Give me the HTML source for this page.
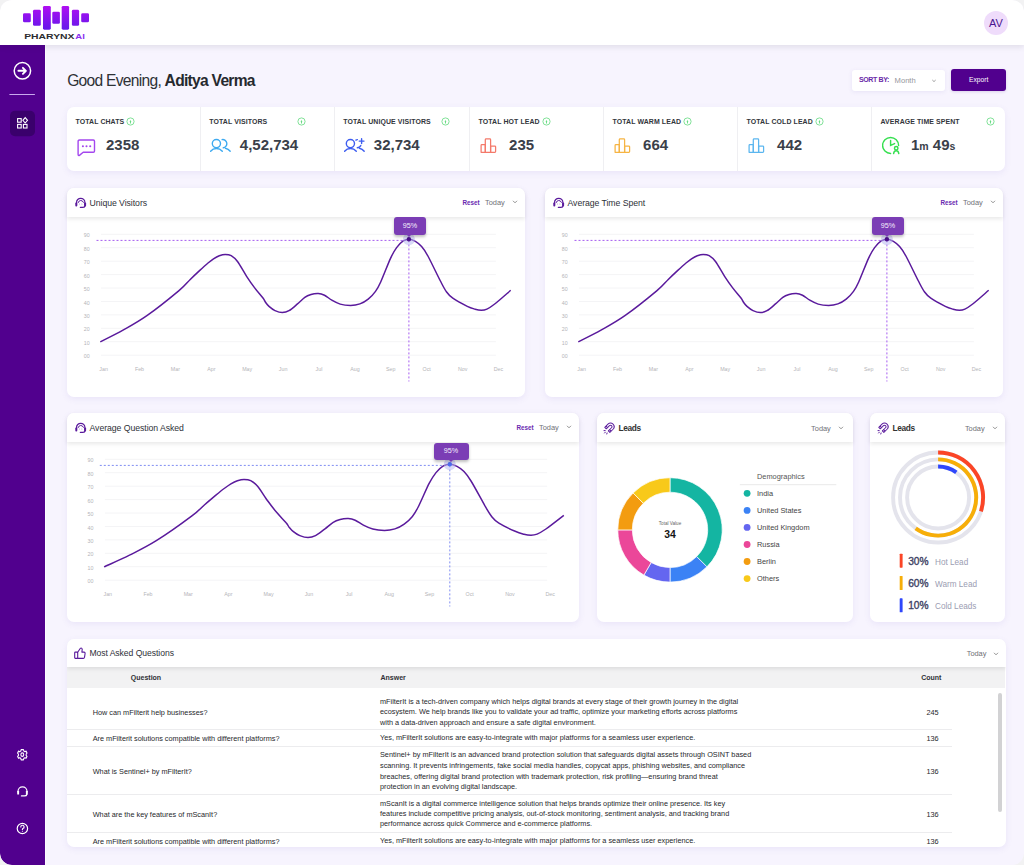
<!DOCTYPE html>
<html><head><meta charset="utf-8">
<style>
*{box-sizing:border-box;margin:0;padding:0}
html,body{width:1024px;height:865px;overflow:hidden;background:#f2f2f3}
body{font-family:"Liberation Sans",sans-serif;color:#2e3138;position:relative}
.page{position:absolute;left:0;top:0;width:1024px;height:865px;border-radius:12px;overflow:hidden;background:#f7f4fe}
.abs{position:absolute}
.header{position:absolute;left:0;top:0;width:1024px;height:45px;background:#fff;box-shadow:0 2px 6px rgba(20,20,40,0.10);z-index:5}
.side{position:absolute;left:0;top:45px;width:46px;height:820px;background:#51008e;border-right:1.4px solid #fdfcff;z-index:4;border-bottom-left-radius:12px}
.card{position:absolute;background:#fff;border-radius:7px;box-shadow:0 2px 6px rgba(120,100,200,0.10)}
.chdr{position:absolute;left:0;top:0;width:100%;height:29px;background:#fff;border-radius:7px 7px 0 0;box-shadow:0 2px 4px rgba(0,0,0,0.09);z-index:2}
.ttl{position:absolute;top:9.5px;left:22.5px;font-size:8.7px;color:#2e3138;white-space:nowrap;letter-spacing:-0.05px}
.ticon{position:absolute;left:7px;top:9px}
.reset{position:absolute;top:10.5px;font-size:6.3px;font-weight:bold;color:#6a2ab0}
.today{position:absolute;top:10px;font-size:7.4px;color:#707076}
.chev{position:absolute;top:12px}
.chart{position:absolute;left:0;top:0;overflow:visible}
.yl{font-size:5.3px;fill:#b4b4b8;text-anchor:end;font-family:"Liberation Sans",sans-serif}
.ml{font-size:5.3px;fill:#b4b4b8;text-anchor:middle;font-family:"Liberation Sans",sans-serif}
.tip:after{content:"";position:absolute;left:50%;bottom:-2px;margin-left:-2.5px;border-left:2.5px solid transparent;border-right:2.5px solid transparent;border-top:2px solid #7b3db5}
.tip{position:absolute;width:31.6px;height:17.5px;background:#7b3db5;border-radius:3px;color:#f4eefc;font-size:7.2px;text-align:center;line-height:17.5px;box-shadow:0 2px 3px rgba(0,0,0,0.25);z-index:3}
.stat{position:absolute;top:0;height:64px;width:134px;border-left:1px solid #efeff2}
.stat:first-child{border-left:none}
.slab{position:absolute;left:8.5px;top:10.5px;font-size:6.95px;font-weight:bold;color:#33363c;white-space:nowrap;letter-spacing:0.1px}
.sval{position:absolute;left:39px;top:29px;font-size:15px;font-weight:bold;color:#3a4049;white-space:nowrap}
.sico{position:absolute;left:9px;top:30px}
.up{position:absolute;top:9.6px}
.sval small{font-size:10.5px;font-weight:bold}
.hd{font-size:7px;font-weight:bold;color:#2f3136;line-height:9px;white-space:nowrap}
.td{font-size:7.3px;color:#26282c;white-space:nowrap;line-height:10.4px}
</style></head><body>
<div class="page">

<!-- header -->
<div class="header">
  <svg class="abs" style="left:0;top:0" width="100" height="45">
    <defs><linearGradient id="lg" gradientUnits="userSpaceOnUse" x1="0" y1="5.9" x2="0" y2="29.7">
      <stop offset="0" stop-color="#b00ef2"/><stop offset="1" stop-color="#6418ea"/></linearGradient></defs>
    <rect x="23" y="13.3" width="7.8" height="9" rx="1.4" fill="url(#lg)"/>
    <rect x="33" y="9.8" width="7.8" height="16" rx="1.4" fill="url(#lg)"/>
    <rect x="43" y="5.9" width="7.8" height="23.8" rx="1.4" fill="url(#lg)"/>
    <rect x="52.3" y="11.7" width="7.6" height="12.1" rx="1.4" fill="url(#lg)"/>
    <rect x="61.7" y="5.9" width="7.4" height="23.8" rx="1.4" fill="url(#lg)"/>
    <rect x="71.9" y="9.8" width="7.2" height="16" rx="1.4" fill="url(#lg)"/>
    <rect x="81.2" y="13.3" width="7.8" height="9" rx="1.4" fill="url(#lg)"/>
    <text x="24.2" y="38.7" font-family="Liberation Sans" font-weight="bold" font-size="7.2" fill="#2b2b30" textLength="50.3" lengthAdjust="spacingAndGlyphs">PHARYNX</text>
    <text x="75.3" y="38.7" font-family="Liberation Sans" font-weight="bold" font-size="7.2" fill="#8a2ef0" textLength="9.5" lengthAdjust="spacingAndGlyphs">AI</text>
  </svg>
  <div class="abs" style="left:984px;top:10.5px;width:24px;height:24px;border-radius:50%;background:#efdcfb;color:#4a1490;font-size:11px;text-align:center;line-height:24px">AV</div>
</div>

<!-- sidebar -->
<div class="side">
  <svg class="abs" style="left:0;top:0" width="45" height="820">
    <circle cx="22.4" cy="25.8" r="8.2" fill="none" stroke="#fff" stroke-width="1.5"/>
    <path d="M18.4 25.8 H25.8 M22.9 22.8 L25.9 25.8 L22.9 28.8" fill="none" stroke="#fff" stroke-width="1.9" stroke-linecap="round" stroke-linejoin="round"/>
    <line x1="9.4" y1="49.5" x2="34.9" y2="49.5" stroke="#c9a8ee" stroke-width="1"/>
    <rect x="10" y="65.7" width="25" height="25.5" rx="5" fill="#3a006c"/>
    <rect x="17.6" y="73.6" width="3.6" height="3.6" fill="none" stroke="#fff" stroke-width="1.1"/>
    <rect x="17.6" y="79.4" width="3.6" height="3.6" fill="none" stroke="#fff" stroke-width="1.1"/>
    <rect x="23.4" y="79.4" width="3.6" height="3.6" fill="none" stroke="#fff" stroke-width="1.1"/>
    <path d="M25.2 72.6 L27.5 75.3 L25.2 78 L22.9 75.3 Z" fill="none" stroke="#fff" stroke-width="1.1"/>
    <!-- settings -->
    <g transform="translate(22.3,709.6) scale(0.84,1)" fill="none" stroke="#fff" stroke-width="1.25">
      <path d="M-1.4,-5 L1.4,-5 L1.8,-3.6 L3.2,-2.9 L4.5,-3.5 L5.6,-1.5 L4.6,-0.5 L4.6,0.9 L5.6,1.8 L4.5,3.7 L3.2,3.1 L1.8,3.8 L1.4,5.2 L-1.4,5.2 L-1.8,3.8 L-3.2,3.1 L-4.5,3.7 L-5.6,1.8 L-4.6,0.9 L-4.6,-0.5 L-5.6,-1.5 L-4.5,-3.5 L-3.2,-2.9 L-1.8,-3.6 Z" stroke-linejoin="round"/>
      <circle cx="0" cy="0.1" r="1.7"/>
    </g>
    <!-- headset -->
    <g transform="translate(22.4,746.3)" fill="none" stroke="#fff" stroke-width="1.2" stroke-linecap="round">
      <path d="M-4.4,0.6 V0 A4.5,4.5 0 0 1 4.6,0 V0.6"/>
      <rect x="-5.2" y="-0.4" width="1.9" height="3.6" rx="0.5" fill="#fff" stroke="none"/>
      <rect x="3.5" y="-0.4" width="1.9" height="3.6" rx="0.5" fill="#fff" stroke="none"/>
      <path d="M4.4,3 Q4.2,4.6 2,4.6 H-0.9" stroke-width="1.4"/>
    </g>
    <!-- help -->
    <g transform="translate(22.4,783.5)" fill="none" stroke="#fff" stroke-width="1.2">
      <circle cx="0" cy="0" r="5.2"/>
      <path d="M-1.6,-1.5 A1.65,1.65 0 1 1 0.5,0 Q0,0.4 0,1.1" stroke-linecap="round"/>
      <circle cx="0" cy="2.7" r="0.55" fill="#fff" stroke="none"/>
    </g>
  </svg>
</div>

<!-- greeting -->
<div class="abs" style="left:67.2px;top:71.7px;font-size:15.6px;color:#2e3136;white-space:nowrap;letter-spacing:-0.72px">Good Evening, <b style="font-weight:bold;color:#26292e">Aditya Verma</b></div>

<!-- sort by -->
<div class="abs" style="left:852.3px;top:69.5px;width:92.6px;height:21.3px;background:#fff;border-radius:3px;box-shadow:0 1px 4px rgba(100,80,180,0.10)">
  <span class="abs" style="left:6.7px;top:6.6px;font-size:7px;font-weight:bold;color:#6a2aa8;letter-spacing:-0.38px">SORT BY:</span>
  <span class="abs" style="left:42.3px;top:6.1px;font-size:7.6px;color:#96969c">Month</span>
  <svg class="abs" style="left:78.3px;top:9.2px" width="6" height="4"><path d="M1.3 1 L3 2.6 L4.7 1" fill="none" stroke="#888" stroke-width="0.8"/></svg>
</div>
<div class="abs" style="left:951.4px;top:69.1px;width:54.4px;height:21.6px;background:#51008e;border-radius:3px;color:#fff;font-size:6.7px;text-align:center;line-height:21.6px;box-shadow:0 1px 3px rgba(60,0,120,0.15)">Export</div>

<!-- stats -->
<div class="card" style="left:67px;top:107.2px;width:938px;height:64px;">
  <div class="stat" style="left:0px;border-left:none">
<div class="slab">TOTAL CHATS</div>
<svg class="up" style="left:58.8px" width="9" height="9" viewBox="0 0 9 9"><circle cx="4.5" cy="4.5" r="3.6" fill="none" stroke="#6cdc86" stroke-width="0.85"/><path d="M4.5,6.1 V4.3" fill="none" stroke="#5fd97a" stroke-width="0.9" stroke-linecap="round"/><path d="M3.4,4.5 L4.5,3.3 L5.6,4.5 Z" fill="#5fd97a"/></svg>
<svg class="sico" style="left:10px;top:31.4px" width="19" height="18" viewBox="0 0 19 18"><path d="M2.5,1 H16.3 Q17.5,1 17.5,2.2 V12 Q17.5,13.2 16.3,13.2 H6.2 L2.7,16.1 Q1.1,17.2 1.1,15.3 V2.4 Q1.1,1 2.5,1 Z" fill="none" stroke="#a447ee" stroke-width="1.4" stroke-linejoin="round"/><circle cx="5.9" cy="7.2" r="1.05" fill="#a447ee"/><circle cx="9.5" cy="7.2" r="1.05" fill="#a447ee"/><circle cx="13.2" cy="7.2" r="1.05" fill="#a447ee"/></svg>
<div class="sval">2358</div>
</div>
<div class="stat" style="left:132.8px">
<div class="slab">TOTAL VISITORS</div>
<svg class="up" style="left:95.8px" width="9" height="9" viewBox="0 0 9 9"><circle cx="4.5" cy="4.5" r="3.6" fill="none" stroke="#6cdc86" stroke-width="0.85"/><path d="M4.5,6.1 V4.3" fill="none" stroke="#5fd97a" stroke-width="0.9" stroke-linecap="round"/><path d="M3.4,4.5 L4.5,3.3 L5.6,4.5 Z" fill="#5fd97a"/></svg>
<svg class="sico" style="left:9.3px;top:31px" width="22" height="15" viewBox="0 0 22 15"><g fill="none" stroke="#3eaaf0" stroke-width="1.4" stroke-linecap="round"><circle cx="6.4" cy="5.6" r="4.1"/><path d="M0.6,13.3 A7.6,7.6 0 0 1 12.3,13.3"/><path d="M12.1,1.6 A4.1,4.1 0 1 1 13.3,9.8"/><path d="M15.4,10.3 Q18.4,11 20.2,13.3"/></g></svg>
<div class="sval">4,52,734</div>
</div>
<div class="stat" style="left:266.8px">
<div class="slab">TOTAL UNIQUE VISITORS</div>
<svg class="up" style="left:106.5px" width="9" height="9" viewBox="0 0 9 9"><circle cx="4.5" cy="4.5" r="3.6" fill="none" stroke="#6cdc86" stroke-width="0.85"/><path d="M4.5,6.1 V4.3" fill="none" stroke="#5fd97a" stroke-width="0.9" stroke-linecap="round"/><path d="M3.4,4.5 L4.5,3.3 L5.6,4.5 Z" fill="#5fd97a"/></svg>
<svg class="sico" style="left:9.3px;top:31px" width="22" height="15" viewBox="0 0 22 15"><g fill="none" stroke="#3d5df0" stroke-width="1.4" stroke-linecap="round"><circle cx="6.4" cy="5.6" r="4.1"/><path d="M0.6,13.3 A7.6,7.6 0 0 1 12.3,13.3"/><path d="M11.9,2.1 Q12.6,1.6 13.4,1.6"/><path d="M16.8,7.6 Q15.8,9.6 13.3,9.8"/><path d="M15.4,10.3 Q18.4,11 20.2,13.3"/><path d="M17.6,0.7 V5.5 M15.2,3.1 H20"/></g></svg>
<div class="sval">32,734</div>
</div>
<div class="stat" style="left:402.1px">
<div class="slab">TOTAL HOT LEAD</div>
<svg class="up" style="left:71.7px" width="9" height="9" viewBox="0 0 9 9"><circle cx="4.5" cy="4.5" r="3.6" fill="none" stroke="#6cdc86" stroke-width="0.85"/><path d="M4.5,6.1 V4.3" fill="none" stroke="#5fd97a" stroke-width="0.9" stroke-linecap="round"/><path d="M3.4,4.5 L4.5,3.3 L5.6,4.5 Z" fill="#5fd97a"/></svg>
<svg class="sico" style="left:10.1px;top:30.4px" width="18" height="17" viewBox="0 0 18 17"><g fill="none" stroke="#f4796a" stroke-width="1.25" stroke-linejoin="round"><path d="M1.1,14.35 V7.4 Q1.1,6.6 1.9,6.6 H5.3 V14.35 Z"/><path d="M5.3,14.35 V1.7 Q5.3,0.9 6.1,0.9 H9.8 Q10.6,0.9 10.6,1.7 V14.35 Z"/><path d="M10.6,14.35 V8 H14.8 Q15.6,8 15.6,8.8 V13.55 Q15.6,14.35 14.8,14.35 Z"/></g></svg>
<div class="sval">235</div>
</div>
<div class="stat" style="left:536.1px">
<div class="slab">TOTAL WARM LEAD</div>
<svg class="up" style="left:79.2px" width="9" height="9" viewBox="0 0 9 9"><circle cx="4.5" cy="4.5" r="3.6" fill="none" stroke="#6cdc86" stroke-width="0.85"/><path d="M4.5,6.1 V4.3" fill="none" stroke="#5fd97a" stroke-width="0.9" stroke-linecap="round"/><path d="M3.4,4.5 L4.5,3.3 L5.6,4.5 Z" fill="#5fd97a"/></svg>
<svg class="sico" style="left:10.1px;top:30.4px" width="18" height="17" viewBox="0 0 18 17"><g fill="none" stroke="#f6b443" stroke-width="1.25" stroke-linejoin="round"><path d="M1.1,14.35 V7.4 Q1.1,6.6 1.9,6.6 H5.3 V14.35 Z"/><path d="M5.3,14.35 V1.7 Q5.3,0.9 6.1,0.9 H9.8 Q10.6,0.9 10.6,1.7 V14.35 Z"/><path d="M10.6,14.35 V8 H14.8 Q15.6,8 15.6,8.8 V13.55 Q15.6,14.35 14.8,14.35 Z"/></g></svg>
<div class="sval">664</div>
</div>
<div class="stat" style="left:670.1px">
<div class="slab">TOTAL COLD LEAD</div>
<svg class="up" style="left:77.2px" width="9" height="9" viewBox="0 0 9 9"><circle cx="4.5" cy="4.5" r="3.6" fill="none" stroke="#6cdc86" stroke-width="0.85"/><path d="M4.5,6.1 V4.3" fill="none" stroke="#5fd97a" stroke-width="0.9" stroke-linecap="round"/><path d="M3.4,4.5 L4.5,3.3 L5.6,4.5 Z" fill="#5fd97a"/></svg>
<svg class="sico" style="left:10.1px;top:30.4px" width="18" height="17" viewBox="0 0 18 17"><g fill="none" stroke="#5bb6ef" stroke-width="1.25" stroke-linejoin="round"><path d="M1.1,14.35 V7.4 Q1.1,6.6 1.9,6.6 H5.3 V14.35 Z"/><path d="M5.3,14.35 V1.7 Q5.3,0.9 6.1,0.9 H9.8 Q10.6,0.9 10.6,1.7 V14.35 Z"/><path d="M10.6,14.35 V8 H14.8 Q15.6,8 15.6,8.8 V13.55 Q15.6,14.35 14.8,14.35 Z"/></g></svg>
<div class="sval">442</div>
</div>
<div class="stat" style="left:804.0px">
<div class="slab">AVERAGE TIME SPENT</div>
<svg class="up" style="left:113.6px" width="9" height="9" viewBox="0 0 9 9"><circle cx="4.5" cy="4.5" r="3.6" fill="none" stroke="#6cdc86" stroke-width="0.85"/><path d="M4.5,6.1 V4.3" fill="none" stroke="#5fd97a" stroke-width="0.9" stroke-linecap="round"/><path d="M3.4,4.5 L4.5,3.3 L5.6,4.5 Z" fill="#5fd97a"/></svg>
<svg class="sico" style="left:10.3px;top:28.6px" width="20" height="19" viewBox="0 0 20 19"><g fill="none" stroke="#36df50" stroke-width="1.45" stroke-linecap="round"><path d="M8.6,17.4 A8,8 0 1 1 16.6,9.4"/><path d="M8.6,4.4 V9.4 L12.6,7.6"/><circle cx="14.2" cy="12.3" r="1.75"/><path d="M11.6,17.6 Q12,14.8 14.2,14.8 Q16.4,14.8 16.8,17.6"/></g></svg>
<div class="sval">1<small>m</small> 49<small>s</small></div>
</div>
</div>

<!-- chart 1 -->
<div class="card" style="left:67px;top:188px;width:458px;height:209px;">
  <svg class="chart" width="458" height="180" viewBox="0 0 458 180">
<line x1="34.0" y1="46.3" x2="428.9" y2="46.3" stroke="#f4f4f6" stroke-width="1"/>
<text x="22.6" y="49.4" class="yl">90</text>
<line x1="34.0" y1="59.7" x2="428.9" y2="59.7" stroke="#f4f4f6" stroke-width="1"/>
<text x="22.6" y="62.8" class="yl">80</text>
<line x1="34.0" y1="73.2" x2="428.9" y2="73.2" stroke="#f4f4f6" stroke-width="1"/>
<text x="22.6" y="76.3" class="yl">70</text>
<line x1="34.0" y1="86.6" x2="428.9" y2="86.6" stroke="#f4f4f6" stroke-width="1"/>
<text x="22.6" y="89.7" class="yl">60</text>
<line x1="34.0" y1="100.0" x2="428.9" y2="100.0" stroke="#f4f4f6" stroke-width="1"/>
<text x="22.6" y="103.1" class="yl">50</text>
<line x1="34.0" y1="113.5" x2="428.9" y2="113.5" stroke="#f4f4f6" stroke-width="1"/>
<text x="22.6" y="116.5" class="yl">40</text>
<line x1="34.0" y1="126.9" x2="428.9" y2="126.9" stroke="#f4f4f6" stroke-width="1"/>
<text x="22.6" y="130.0" class="yl">30</text>
<line x1="34.0" y1="140.3" x2="428.9" y2="140.3" stroke="#f4f4f6" stroke-width="1"/>
<text x="22.6" y="143.4" class="yl">20</text>
<line x1="34.0" y1="153.7" x2="428.9" y2="153.7" stroke="#f4f4f6" stroke-width="1"/>
<text x="22.6" y="156.8" class="yl">10</text>
<line x1="34.0" y1="167.2" x2="428.9" y2="167.2" stroke="#f4f4f6" stroke-width="1"/>
<text x="22.6" y="170.3" class="yl">00</text>
<text x="36.6" y="183" class="ml">Jan</text>
<text x="72.5" y="183" class="ml">Feb</text>
<text x="108.4" y="183" class="ml">Mar</text>
<text x="144.3" y="183" class="ml">Apr</text>
<text x="180.2" y="183" class="ml">May</text>
<text x="216.1" y="183" class="ml">Jun</text>
<text x="252.0" y="183" class="ml">Jul</text>
<text x="287.9" y="183" class="ml">Aug</text>
<text x="323.8" y="183" class="ml">Sep</text>
<text x="359.7" y="183" class="ml">Oct</text>
<text x="395.6" y="183" class="ml">Nov</text>
<text x="431.5" y="183" class="ml">Dec</text>
<line x1="29.5" y1="52.4" x2="341.9" y2="52.4" stroke="#a65df0" stroke-width="1" stroke-dasharray="2,2"/>
<line x1="341.9" y1="52.4" x2="341.9" y2="193.5" stroke="#a65df0" stroke-width="1" stroke-dasharray="2,2"/>
<path d="M33.3,153.9 C37.1,151.9 48.2,146.6 56.0,142.2 C63.8,137.8 70.6,134.2 79.9,127.7 C89.2,121.2 104.5,108.9 111.7,102.9 C118.9,96.9 119.5,95.1 123.0,91.7 C126.5,88.3 129.9,85.1 132.8,82.4 C135.7,79.7 138.2,77.4 140.5,75.5 C142.8,73.6 144.5,72.1 146.5,70.8 C148.5,69.5 150.4,68.4 152.3,67.7 C154.2,67.0 156.2,66.4 158.2,66.4 C160.2,66.4 162.1,66.4 164.2,67.6 C166.2,68.8 167.9,70.0 170.5,73.5 C173.1,77.0 176.8,84.0 179.6,88.3 C182.4,92.6 184.8,96.0 187.5,99.6 C190.2,103.2 194.0,107.4 195.8,109.8 C197.6,112.2 197.5,112.8 198.5,114.2 C199.5,115.6 200.4,117.0 202.0,118.4 C203.6,119.8 205.8,121.6 208.0,122.6 C210.2,123.6 213.0,124.6 215.3,124.6 C217.6,124.6 219.5,124.2 222.0,122.7 C224.5,121.2 227.9,118.1 230.5,115.9 C233.1,113.7 235.6,111.0 237.8,109.4 C240.1,107.8 241.8,107.2 244.0,106.5 C246.2,105.8 249.1,105.4 251.3,105.5 C253.6,105.6 255.2,106.1 257.5,107.2 C259.8,108.3 262.2,110.7 264.8,112.2 C267.4,113.7 270.1,115.2 273.2,116.1 C276.3,117.0 280.3,117.4 283.6,117.4 C286.9,117.4 290.0,116.9 292.9,115.9 C295.8,114.9 298.6,113.3 301.2,111.2 C303.8,109.1 306.4,106.3 308.5,103.4 C310.6,100.5 311.2,99.5 313.7,94.0 C316.2,88.5 320.8,76.3 323.4,70.6 C326.0,64.9 327.5,62.5 329.6,59.6 C331.7,56.7 333.8,54.5 335.9,53.1 C337.9,51.7 339.8,51.2 341.9,51.2 C344.0,51.2 346.3,52.2 348.4,53.4 C350.5,54.6 352.5,56.2 354.6,58.6 C356.7,61.0 357.8,62.3 360.9,68.0 C364.0,73.7 370.3,87.0 373.4,93.0 C376.5,99.0 377.5,101.1 379.6,104.0 C381.7,106.9 382.4,107.8 385.8,110.2 C389.2,112.6 396.6,116.5 400.3,118.3 C404.0,120.1 405.9,120.5 408.2,121.2 C410.5,121.9 412.4,122.2 414.4,122.2 C416.3,122.2 417.7,122.1 419.9,121.1 C422.1,120.1 423.7,119.1 427.7,116.0 C431.7,112.9 441.0,104.6 443.7,102.3" fill="none" stroke="#5a1a9c" stroke-width="1.5"/>
<circle cx="341.9" cy="51.2" r="6" fill="#b9b9f0" opacity="0.55"/>
<circle cx="341.9" cy="51.2" r="2.2" fill="#4a0f8a"/>
</svg>
  <div class="chdr">
    <svg class="ticon" width="13" height="12" viewBox="0 0 13 12" style="left:7.5px;top:9px">
<g fill="none" stroke="#5a1a9c" stroke-linecap="round">
<path d="M1.5,7.5 V5.5 A4.2,4.2 0 0 1 9.9,5.5 V7.5" stroke-width="1.2"/>
<path d="M3.1,5.6 Q4,3.3 5.7,3.5 Q7.5,3.3 8.4,5.3" stroke-width="1"/>
<path d="M10,8.7 Q9.9,10.4 7.9,10.4 H5.4" stroke-width="1.3"/>
</g>
<rect x="0.3" y="5.5" width="2" height="4" rx="0.9" fill="#5a1a9c"/>
<rect x="9.1" y="5.5" width="2" height="4" rx="0.9" fill="#5a1a9c"/>
<circle cx="4.6" cy="7" r="0.45" fill="#8a60c0"/><circle cx="6.9" cy="7" r="0.45" fill="#8a60c0"/>
</svg>
    <div class="ttl">Unique Visitors</div>
    <div class="reset" style="left:395.4px">Reset</div>
    <div class="today" style="left:418px">Today</div>
    <svg class="chev" style="left:444.5px" width="6" height="4"><path d="M1 0.8 L3 2.8 L5 0.8" fill="none" stroke="#777" stroke-width="0.8"/></svg>
  </div>
  <div class="tip" style="left:327.1px;top:29px">95%</div>
</div>

<!-- chart 2 -->
<div class="card" style="left:545px;top:188px;width:458px;height:209px;">
  <svg class="chart" width="458" height="180" viewBox="0 0 458 180">
<line x1="34.0" y1="46.3" x2="428.9" y2="46.3" stroke="#f4f4f6" stroke-width="1"/>
<text x="22.6" y="49.4" class="yl">90</text>
<line x1="34.0" y1="59.7" x2="428.9" y2="59.7" stroke="#f4f4f6" stroke-width="1"/>
<text x="22.6" y="62.8" class="yl">80</text>
<line x1="34.0" y1="73.2" x2="428.9" y2="73.2" stroke="#f4f4f6" stroke-width="1"/>
<text x="22.6" y="76.3" class="yl">70</text>
<line x1="34.0" y1="86.6" x2="428.9" y2="86.6" stroke="#f4f4f6" stroke-width="1"/>
<text x="22.6" y="89.7" class="yl">60</text>
<line x1="34.0" y1="100.0" x2="428.9" y2="100.0" stroke="#f4f4f6" stroke-width="1"/>
<text x="22.6" y="103.1" class="yl">50</text>
<line x1="34.0" y1="113.5" x2="428.9" y2="113.5" stroke="#f4f4f6" stroke-width="1"/>
<text x="22.6" y="116.5" class="yl">40</text>
<line x1="34.0" y1="126.9" x2="428.9" y2="126.9" stroke="#f4f4f6" stroke-width="1"/>
<text x="22.6" y="130.0" class="yl">30</text>
<line x1="34.0" y1="140.3" x2="428.9" y2="140.3" stroke="#f4f4f6" stroke-width="1"/>
<text x="22.6" y="143.4" class="yl">20</text>
<line x1="34.0" y1="153.7" x2="428.9" y2="153.7" stroke="#f4f4f6" stroke-width="1"/>
<text x="22.6" y="156.8" class="yl">10</text>
<line x1="34.0" y1="167.2" x2="428.9" y2="167.2" stroke="#f4f4f6" stroke-width="1"/>
<text x="22.6" y="170.3" class="yl">00</text>
<text x="36.6" y="183" class="ml">Jan</text>
<text x="72.5" y="183" class="ml">Feb</text>
<text x="108.4" y="183" class="ml">Mar</text>
<text x="144.3" y="183" class="ml">Apr</text>
<text x="180.2" y="183" class="ml">May</text>
<text x="216.1" y="183" class="ml">Jun</text>
<text x="252.0" y="183" class="ml">Jul</text>
<text x="287.9" y="183" class="ml">Aug</text>
<text x="323.8" y="183" class="ml">Sep</text>
<text x="359.7" y="183" class="ml">Oct</text>
<text x="395.6" y="183" class="ml">Nov</text>
<text x="431.5" y="183" class="ml">Dec</text>
<line x1="29.5" y1="52.4" x2="341.9" y2="52.4" stroke="#a65df0" stroke-width="1" stroke-dasharray="2,2"/>
<line x1="341.9" y1="52.4" x2="341.9" y2="193.5" stroke="#a65df0" stroke-width="1" stroke-dasharray="2,2"/>
<path d="M33.3,153.9 C37.1,151.9 48.2,146.6 56.0,142.2 C63.8,137.8 70.6,134.2 79.9,127.7 C89.2,121.2 104.5,108.9 111.7,102.9 C118.9,96.9 119.5,95.1 123.0,91.7 C126.5,88.3 129.9,85.1 132.8,82.4 C135.7,79.7 138.2,77.4 140.5,75.5 C142.8,73.6 144.5,72.1 146.5,70.8 C148.5,69.5 150.4,68.4 152.3,67.7 C154.2,67.0 156.2,66.4 158.2,66.4 C160.2,66.4 162.1,66.4 164.2,67.6 C166.2,68.8 167.9,70.0 170.5,73.5 C173.1,77.0 176.8,84.0 179.6,88.3 C182.4,92.6 184.8,96.0 187.5,99.6 C190.2,103.2 194.0,107.4 195.8,109.8 C197.6,112.2 197.5,112.8 198.5,114.2 C199.5,115.6 200.4,117.0 202.0,118.4 C203.6,119.8 205.8,121.6 208.0,122.6 C210.2,123.6 213.0,124.6 215.3,124.6 C217.6,124.6 219.5,124.2 222.0,122.7 C224.5,121.2 227.9,118.1 230.5,115.9 C233.1,113.7 235.6,111.0 237.8,109.4 C240.1,107.8 241.8,107.2 244.0,106.5 C246.2,105.8 249.1,105.4 251.3,105.5 C253.6,105.6 255.2,106.1 257.5,107.2 C259.8,108.3 262.2,110.7 264.8,112.2 C267.4,113.7 270.1,115.2 273.2,116.1 C276.3,117.0 280.3,117.4 283.6,117.4 C286.9,117.4 290.0,116.9 292.9,115.9 C295.8,114.9 298.6,113.3 301.2,111.2 C303.8,109.1 306.4,106.3 308.5,103.4 C310.6,100.5 311.2,99.5 313.7,94.0 C316.2,88.5 320.8,76.3 323.4,70.6 C326.0,64.9 327.5,62.5 329.6,59.6 C331.7,56.7 333.8,54.5 335.9,53.1 C337.9,51.7 339.8,51.2 341.9,51.2 C344.0,51.2 346.3,52.2 348.4,53.4 C350.5,54.6 352.5,56.2 354.6,58.6 C356.7,61.0 357.8,62.3 360.9,68.0 C364.0,73.7 370.3,87.0 373.4,93.0 C376.5,99.0 377.5,101.1 379.6,104.0 C381.7,106.9 382.4,107.8 385.8,110.2 C389.2,112.6 396.6,116.5 400.3,118.3 C404.0,120.1 405.9,120.5 408.2,121.2 C410.5,121.9 412.4,122.2 414.4,122.2 C416.3,122.2 417.7,122.1 419.9,121.1 C422.1,120.1 423.7,119.1 427.7,116.0 C431.7,112.9 441.0,104.6 443.7,102.3" fill="none" stroke="#5a1a9c" stroke-width="1.5"/>
<circle cx="341.9" cy="51.2" r="6" fill="#b9b9f0" opacity="0.55"/>
<circle cx="341.9" cy="51.2" r="2.2" fill="#4a0f8a"/>
</svg>
  <div class="chdr">
    <svg class="ticon" width="13" height="12" viewBox="0 0 13 12" style="left:7.5px;top:9px">
<g fill="none" stroke="#5a1a9c" stroke-linecap="round">
<path d="M1.5,7.5 V5.5 A4.2,4.2 0 0 1 9.9,5.5 V7.5" stroke-width="1.2"/>
<path d="M3.1,5.6 Q4,3.3 5.7,3.5 Q7.5,3.3 8.4,5.3" stroke-width="1"/>
<path d="M10,8.7 Q9.9,10.4 7.9,10.4 H5.4" stroke-width="1.3"/>
</g>
<rect x="0.3" y="5.5" width="2" height="4" rx="0.9" fill="#5a1a9c"/>
<rect x="9.1" y="5.5" width="2" height="4" rx="0.9" fill="#5a1a9c"/>
<circle cx="4.6" cy="7" r="0.45" fill="#8a60c0"/><circle cx="6.9" cy="7" r="0.45" fill="#8a60c0"/>
</svg>
    <div class="ttl">Average Time Spent</div>
    <div class="reset" style="left:395.4px">Reset</div>
    <div class="today" style="left:418px">Today</div>
    <svg class="chev" style="left:444.5px" width="6" height="4"><path d="M1 0.8 L3 2.8 L5 0.8" fill="none" stroke="#777" stroke-width="0.8"/></svg>
  </div>
  <div class="tip" style="left:327.1px;top:29px">95%</div>
</div>

<!-- chart 3 -->
<div class="card" style="left:67px;top:413.3px;width:512px;height:209px;">
  <svg class="chart" width="512" height="180" viewBox="0 0 512 180">
<line x1="37.9" y1="46.3" x2="480.2" y2="46.3" stroke="#f4f4f6" stroke-width="1"/>
<text x="26.5" y="49.4" class="yl">90</text>
<line x1="37.9" y1="59.7" x2="480.2" y2="59.7" stroke="#f4f4f6" stroke-width="1"/>
<text x="26.5" y="62.8" class="yl">80</text>
<line x1="37.9" y1="73.2" x2="480.2" y2="73.2" stroke="#f4f4f6" stroke-width="1"/>
<text x="26.5" y="76.3" class="yl">70</text>
<line x1="37.9" y1="86.6" x2="480.2" y2="86.6" stroke="#f4f4f6" stroke-width="1"/>
<text x="26.5" y="89.7" class="yl">60</text>
<line x1="37.9" y1="100.0" x2="480.2" y2="100.0" stroke="#f4f4f6" stroke-width="1"/>
<text x="26.5" y="103.1" class="yl">50</text>
<line x1="37.9" y1="113.5" x2="480.2" y2="113.5" stroke="#f4f4f6" stroke-width="1"/>
<text x="26.5" y="116.5" class="yl">40</text>
<line x1="37.9" y1="126.9" x2="480.2" y2="126.9" stroke="#f4f4f6" stroke-width="1"/>
<text x="26.5" y="130.0" class="yl">30</text>
<line x1="37.9" y1="140.3" x2="480.2" y2="140.3" stroke="#f4f4f6" stroke-width="1"/>
<text x="26.5" y="143.4" class="yl">20</text>
<line x1="37.9" y1="153.7" x2="480.2" y2="153.7" stroke="#f4f4f6" stroke-width="1"/>
<text x="26.5" y="156.8" class="yl">10</text>
<line x1="37.9" y1="167.2" x2="480.2" y2="167.2" stroke="#f4f4f6" stroke-width="1"/>
<text x="26.5" y="170.3" class="yl">00</text>
<text x="40.8" y="183" class="ml">Jan</text>
<text x="81.0" y="183" class="ml">Feb</text>
<text x="121.2" y="183" class="ml">Mar</text>
<text x="161.4" y="183" class="ml">Apr</text>
<text x="201.6" y="183" class="ml">May</text>
<text x="241.9" y="183" class="ml">Jun</text>
<text x="282.1" y="183" class="ml">Jul</text>
<text x="322.3" y="183" class="ml">Aug</text>
<text x="362.5" y="183" class="ml">Sep</text>
<text x="402.7" y="183" class="ml">Oct</text>
<text x="442.9" y="183" class="ml">Nov</text>
<text x="483.1" y="183" class="ml">Dec</text>
<line x1="32.8" y1="52.4" x2="382.8" y2="52.4" stroke="#7f8cf2" stroke-width="1" stroke-dasharray="2,2"/>
<line x1="382.8" y1="52.4" x2="382.8" y2="193.5" stroke="#7f8cf2" stroke-width="1" stroke-dasharray="2,2"/>
<path d="M37.1,153.9 C41.3,151.9 53.8,146.6 62.5,142.2 C71.2,137.8 78.9,134.2 89.3,127.7 C99.7,121.2 116.9,108.9 124.9,102.9 C133.0,96.9 133.6,95.1 137.6,91.7 C141.5,88.3 145.3,85.1 148.5,82.4 C151.8,79.7 154.6,77.4 157.2,75.5 C159.7,73.6 161.7,72.1 163.9,70.8 C166.1,69.5 168.2,68.4 170.4,67.7 C172.6,67.0 174.8,66.4 177.0,66.4 C179.2,66.4 181.4,66.4 183.7,67.6 C186.0,68.8 187.9,70.0 190.8,73.5 C193.7,77.0 197.8,84.0 201.0,88.3 C204.1,92.6 206.8,96.0 209.8,99.6 C212.8,103.2 217.1,107.4 219.1,109.8 C221.2,112.2 221.0,112.8 222.1,114.2 C223.3,115.6 224.3,117.0 226.1,118.4 C227.8,119.8 230.3,121.6 232.8,122.6 C235.3,123.6 238.3,124.6 241.0,124.6 C243.6,124.6 245.6,124.2 248.5,122.7 C251.3,121.2 255.0,118.1 258.0,115.9 C260.9,113.7 263.6,111.0 266.2,109.4 C268.7,107.8 270.6,107.2 273.1,106.5 C275.6,105.8 278.8,105.4 281.3,105.5 C283.8,105.6 285.7,106.1 288.2,107.2 C290.7,108.3 293.5,110.7 296.4,112.2 C299.3,113.7 302.3,115.2 305.8,116.1 C309.3,117.0 313.8,117.4 317.5,117.4 C321.1,117.4 324.6,116.9 327.9,115.9 C331.2,114.9 334.3,113.3 337.2,111.2 C340.1,109.1 343.0,106.3 345.4,103.4 C347.7,100.5 348.4,99.5 351.2,94.0 C354.0,88.5 359.1,76.3 362.0,70.6 C365.0,64.9 366.7,62.5 369.0,59.6 C371.3,56.7 373.7,54.5 376.0,53.1 C378.3,51.7 380.4,51.2 382.8,51.2 C385.1,51.2 387.7,52.2 390.0,53.4 C392.4,54.6 394.7,56.2 397.0,58.6 C399.3,61.0 400.5,62.3 404.0,68.0 C407.6,73.7 414.6,87.0 418.0,93.0 C421.5,99.0 422.7,101.1 425.0,104.0 C427.3,106.9 428.1,107.8 431.9,110.2 C435.8,112.6 444.0,116.5 448.2,118.3 C452.4,120.1 454.4,120.5 457.0,121.2 C459.7,121.9 461.8,122.2 464.0,122.2 C466.2,122.2 467.6,122.1 470.1,121.1 C472.6,120.1 474.4,119.1 478.9,116.0 C483.3,112.9 493.8,104.6 496.8,102.3" fill="none" stroke="#5a1a9c" stroke-width="1.5"/>
<circle cx="382.8" cy="51.2" r="6" fill="#b9b9f0" opacity="0.55"/>
<circle cx="382.8" cy="51.2" r="2.2" fill="#4e6cf0"/>
</svg>
  <div class="chdr">
    <svg class="ticon" width="13" height="12" viewBox="0 0 13 12" style="left:7.5px;top:9px">
<g fill="none" stroke="#5a1a9c" stroke-linecap="round">
<path d="M1.5,7.5 V5.5 A4.2,4.2 0 0 1 9.9,5.5 V7.5" stroke-width="1.2"/>
<path d="M3.1,5.6 Q4,3.3 5.7,3.5 Q7.5,3.3 8.4,5.3" stroke-width="1"/>
<path d="M10,8.7 Q9.9,10.4 7.9,10.4 H5.4" stroke-width="1.3"/>
</g>
<rect x="0.3" y="5.5" width="2" height="4" rx="0.9" fill="#5a1a9c"/>
<rect x="9.1" y="5.5" width="2" height="4" rx="0.9" fill="#5a1a9c"/>
<circle cx="4.6" cy="7" r="0.45" fill="#8a60c0"/><circle cx="6.9" cy="7" r="0.45" fill="#8a60c0"/>
</svg>
    <div class="ttl">Average Question Asked</div>
    <div class="reset" style="left:449.4px">Reset</div>
    <div class="today" style="left:472px">Today</div>
    <svg class="chev" style="left:498.5px" width="6" height="4"><path d="M1 0.8 L3 2.8 L5 0.8" fill="none" stroke="#777" stroke-width="0.8"/></svg>
  </div>
  <div class="tip" style="left:366.5px;top:29.7px;width:35px;height:16.6px;line-height:16.6px">95%</div>
</div>

<div class="card" style="left:596.5px;top:413.3px;width:256px;height:209px;">
<div class="chdr"><svg class="ticon" width="14" height="14" viewBox="0 0 14 14" style="left:5.5px;top:8px">
<g transform="translate(8.5,5.7) rotate(45) scale(0.9)" fill="none" stroke="#5a1a9c" stroke-width="1.05" stroke-linejoin="round">
<path d="M-4,5 V0 A4,4 0 0 1 4,0 V5 H1.6 V0 A1.6,1.6 0 0 0 -1.6,0 V5 Z"/>
<line x1="-4" y1="3" x2="-1.6" y2="3"/><line x1="1.6" y1="3" x2="4" y2="3"/>
</g>
<g stroke="#5a1a9c" stroke-width="1" stroke-linecap="round">
<line x1="2" y1="9.6" x2="3.2" y2="9.6"/><line x1="2.6" y1="12" x2="3.3" y2="11.2"/><line x1="4.8" y1="13" x2="5.1" y2="12"/>
</g></svg><div class="ttl" style="left:22px;font-weight:bold;font-size:8.3px;top:9.9px;color:#333;letter-spacing:-0.35px">Leads</div><div class="today" style="left:214.6px;top:10.3px">Today</div><svg class="chev" style="left:241.5px;top:12.6px" width="6" height="4"><path d="M1 0.8 L3 2.8 L5 0.8" fill="none" stroke="#777" stroke-width="0.8"/></svg></div>
<svg class="abs" style="left:0;top:0" width="256" height="209">
<path d="M73.00,64.70 A52.20,52.20 0 0 1 109.91,153.81 L99.66,143.56 A37.70,37.70 0 0 0 73.00,79.20 Z" fill="#14b5a2" stroke="#fff" stroke-width="0.7"/>
<path d="M109.91,153.81 A52.20,52.20 0 0 1 73.00,169.10 L73.00,154.60 A37.70,37.70 0 0 0 99.66,143.56 Z" fill="#3b82f5" stroke="#fff" stroke-width="0.7"/>
<path d="M73.00,169.10 A52.20,52.20 0 0 1 46.90,162.11 L54.15,149.55 A37.70,37.70 0 0 0 73.00,154.60 Z" fill="#6466f0" stroke="#fff" stroke-width="0.7"/>
<path d="M46.90,162.11 A52.20,52.20 0 0 1 20.80,116.90 L35.30,116.90 A37.70,37.70 0 0 0 54.15,149.55 Z" fill="#eb4799" stroke="#fff" stroke-width="0.7"/>
<path d="M20.80,116.90 A52.20,52.20 0 0 1 36.09,79.99 L46.34,90.24 A37.70,37.70 0 0 0 35.30,116.90 Z" fill="#f39c10" stroke="#fff" stroke-width="0.7"/>
<path d="M36.09,79.99 A52.20,52.20 0 0 1 73.00,64.70 L73.00,79.20 A37.70,37.70 0 0 0 46.34,90.24 Z" fill="#f8c91a" stroke="#fff" stroke-width="0.7"/>
<text x="73.0" y="111.7" text-anchor="middle" font-size="4.6" fill="#666" font-family="Liberation Sans">Total Value</text>
<text x="73.0" y="124.5" text-anchor="middle" font-size="10.4" font-weight="bold" fill="#151515" font-family="Liberation Sans">34</text>
<text x="160.0" y="65.9" font-size="7.4" fill="#555" font-family="Liberation Sans">Demographics</text>
<line x1="142.9" y1="71.7" x2="239.3" y2="71.7" stroke="#e6e6e6" stroke-width="0.9"/>
<circle cx="150.1" cy="80.3" r="3.4" fill="#14b5a2"/>
<text x="160.0" y="82.9" font-size="7.4" fill="#444" font-family="Liberation Sans">India</text>
<circle cx="150.1" cy="97.4" r="3.4" fill="#3b82f5"/>
<text x="160.0" y="100.0" font-size="7.4" fill="#444" font-family="Liberation Sans">United States</text>
<circle cx="150.1" cy="114.4" r="3.4" fill="#6466f0"/>
<text x="160.0" y="117.0" font-size="7.4" fill="#444" font-family="Liberation Sans">United Kingdom</text>
<circle cx="150.1" cy="131.5" r="3.4" fill="#eb4799"/>
<text x="160.0" y="134.1" font-size="7.4" fill="#444" font-family="Liberation Sans">Russia</text>
<circle cx="150.1" cy="148.5" r="3.4" fill="#f39c10"/>
<text x="160.0" y="151.1" font-size="7.4" fill="#444" font-family="Liberation Sans">Berlin</text>
<circle cx="150.1" cy="165.6" r="3.4" fill="#f8c91a"/>
<text x="160.0" y="168.2" font-size="7.4" fill="#444" font-family="Liberation Sans">Others</text>
</svg>
</div>
<div class="card" style="left:869.9px;top:413.3px;width:135.4px;height:209px;">
<div class="chdr"><svg class="ticon" width="14" height="14" viewBox="0 0 14 14" style="left:6px;top:8px">
<g transform="translate(8.5,5.7) rotate(45) scale(0.9)" fill="none" stroke="#5a1a9c" stroke-width="1.05" stroke-linejoin="round">
<path d="M-4,5 V0 A4,4 0 0 1 4,0 V5 H1.6 V0 A1.6,1.6 0 0 0 -1.6,0 V5 Z"/>
<line x1="-4" y1="3" x2="-1.6" y2="3"/><line x1="1.6" y1="3" x2="4" y2="3"/>
</g>
<g stroke="#5a1a9c" stroke-width="1" stroke-linecap="round">
<line x1="2" y1="9.6" x2="3.2" y2="9.6"/><line x1="2.6" y1="12" x2="3.3" y2="11.2"/><line x1="4.8" y1="13" x2="5.1" y2="12"/>
</g></svg><div class="ttl" style="left:22.6px;font-weight:bold;font-size:8.3px;top:9.9px;color:#333;letter-spacing:-0.35px">Leads</div><div class="today" style="left:95px;top:10.3px">Today</div><svg class="chev" style="left:122px;top:12.6px" width="6" height="4"><path d="M1 0.8 L3 2.8 L5 0.8" fill="none" stroke="#777" stroke-width="0.8"/></svg></div>
<svg class="abs" style="left:0;top:0" width="136" height="209">
<circle cx="68.10" cy="84.50" r="45.00" fill="none" stroke="#e4e4ec" stroke-width="3.9"/>
<path d="M68.10,39.50 A45.00,45.00 0 0 1 110.90,98.41" fill="none" stroke="#fb4526" stroke-width="3.9"/>
<circle cx="68.10" cy="84.50" r="38.10" fill="none" stroke="#e4e4ec" stroke-width="3.9"/>
<path d="M68.10,46.40 A38.10,38.10 0 1 1 45.71,115.32" fill="none" stroke="#f7ae08" stroke-width="3.9"/>
<circle cx="68.10" cy="84.50" r="31.00" fill="none" stroke="#e4e4ec" stroke-width="3.9"/>
<path d="M68.10,53.50 A31.00,31.00 0 0 1 86.32,59.42" fill="none" stroke="#2f47fb" stroke-width="3.9"/>
<rect x="29.7" y="140.7" width="2.9" height="14" rx="0.6" fill="#fb4526"/>
<text x="38.2" y="151.8" font-size="10.2" fill="#3d4264" stroke="#3d4264" stroke-width="0.35" font-family="Liberation Sans">30%</text>
<text x="65.0" y="151.8" font-size="8.2" fill="#9b9db2" font-family="Liberation Sans">Hot Lead</text>
<rect x="29.7" y="163.0" width="2.9" height="14" rx="0.6" fill="#f7ae08"/>
<text x="38.2" y="174.1" font-size="10.2" fill="#3d4264" stroke="#3d4264" stroke-width="0.35" font-family="Liberation Sans">60%</text>
<text x="65.0" y="174.1" font-size="8.2" fill="#9b9db2" font-family="Liberation Sans">Warm Lead</text>
<rect x="29.7" y="185.3" width="2.9" height="14" rx="0.6" fill="#2f47fb"/>
<text x="38.2" y="196.4" font-size="10.2" fill="#3d4264" stroke="#3d4264" stroke-width="0.35" font-family="Liberation Sans">10%</text>
<text x="65.0" y="196.4" font-size="8.2" fill="#9b9db2" font-family="Liberation Sans">Cold Leads</text>
</svg>
</div>

<div class="card" style="left:67px;top:638.7px;width:939px;height:208.4px;overflow:hidden">
<div class="chdr" style="height:28.5px"><svg class="ticon" width="13" height="13" viewBox="0 0 13 13" style="left:6.5px;top:8.5px">
<g fill="none" stroke="#5a1a9c" stroke-width="1.1" stroke-linejoin="round" stroke-linecap="round">
<rect x="0.7" y="5.1" width="3" height="6.3" rx="0.6"/>
<path d="M3.7,5.2 L6.2,1.5 Q7.1,0.5 7.9,1.5 Q8.5,2.3 8.1,3.4 L7.9,5.1 H10.2 Q11.3,5.3 11.1,6.5 L10.5,10.4 Q10.3,11.4 9.3,11.4 H3.7"/>
</g></svg><div class="ttl" style="left:22.4px;top:9.7px;font-size:8.6px">Most Asked Questions</div><div class="today" style="left:899.7px;top:10.6px">Today</div><svg class="chev" style="left:925.8px;top:13px" width="6" height="4"><path d="M1 0.8 L3 2.8 L5 0.8" fill="none" stroke="#777" stroke-width="0.8"/></svg></div>
<div class="abs" style="left:0;top:28.3px;width:938.3px;height:20.8px;background:#f2f2f3"></div>
<div class="abs hd" style="left:63.8px;top:34.8px">Question</div>
<div class="abs hd" style="left:313.5px;top:34.3px">Answer</div>
<div class="abs hd" style="left:854.2px;top:34.5px">Count</div>
<div class="abs td" style="left:25.7px;top:69.2px">How can mFilterit help businesses?</div>
<div class="abs td" style="left:313px;top:58.3px;line-height:10.35px">mFilterIt is a tech-driven company which helps digital brands at every stage of their growth journey in the digital<br>ecosystem. We help brands like you to validate your ad traffic, optimize your marketing efforts across platforms<br>with a data-driven approach and ensure a safe digital environment.</div>
<div class="abs td" style="left:859.5px;top:69.2px">245</div>
<div class="abs" style="left:0;top:90.0px;width:885.4px;height:1px;background:#ececee"></div>
<div class="abs td" style="left:25.7px;top:95.4px">Are mFilterit solutions compatible with different platforms?</div>
<div class="abs td" style="left:313px;top:94.6px;line-height:10.40px">Yes, mFilterIt solutions are easy-to-integrate with major platforms for a seamless user experience.</div>
<div class="abs td" style="left:859.5px;top:95.4px">136</div>
<div class="abs" style="left:0;top:107.1px;width:885.4px;height:1px;background:#ececee"></div>
<div class="abs td" style="left:25.7px;top:127.9px">What is Sentinel+ by mFilterIt?</div>
<div class="abs td" style="left:313px;top:111.7px;line-height:10.57px">Sentinel+ by mFilterIt is an advanced brand protection solution that safeguards digital assets through OSINT based<br>scanning. It prevents infringements, fake social media handles, copycat apps, phishing websites, and compliance<br>breaches, offering digital brand protection with trademark protection, risk profiling—ensuring brand threat<br>protection in an evolving digital landscape.</div>
<div class="abs td" style="left:859.5px;top:127.9px">136</div>
<div class="abs" style="left:0;top:155.3px;width:885.4px;height:1px;background:#ececee"></div>
<div class="abs td" style="left:25.7px;top:171.1px">What are the key features of mScanIt?</div>
<div class="abs td" style="left:313px;top:159.9px;line-height:10.35px">mScanIt is a digital commerce intelligence solution that helps brands optimize their online presence. Its key<br>features include competitive pricing analysis, out-of-stock monitoring, sentiment analysis, and tracking brand<br>performance across quick Commerce and e-commerce platforms.</div>
<div class="abs td" style="left:859.5px;top:171.1px">136</div>
<div class="abs" style="left:0;top:193.1px;width:885.4px;height:1px;background:#ececee"></div>
<div class="abs td" style="left:25.7px;top:198.5px">Are mFilterit solutions compatible with different platforms?</div>
<div class="abs td" style="left:313px;top:197.8px;line-height:10.40px">Yes, mFilterIt solutions are easy-to-integrate with major platforms for a seamless user experience.</div>
<div class="abs td" style="left:859.5px;top:198.5px">136</div>
<div class="abs" style="left:931px;top:54.0px;width:4.2px;height:119px;border-radius:2px;background:#d2d2d4"></div>
</div>

</div>
</body></html>
